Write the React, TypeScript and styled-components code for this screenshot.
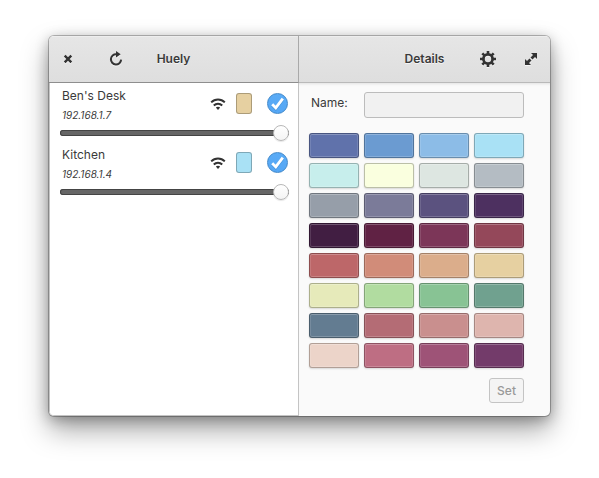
import React, { useState } from "react";
import styled, { createGlobalStyle } from "styled-components";

const GlobalStyle = createGlobalStyle`
  *, *::before, *::after { box-sizing: border-box; }
  body {
    margin: 0;
    background: #fff;
    color: #3a3a3a;
    font-family: Inter, "Open Sans", sans-serif;
    font-size: 12px;
    line-height: 16px;
  }
  button, input { font: inherit; color: inherit; }
`;

const Desktop = styled.div`
  padding: 36px 49px 62px;
`;

const Window = styled.main`
  display: grid;
  grid-template-columns: minmax(0, 250fr) minmax(0, 251fr);
  grid-template-rows: auto 1fr;
  min-height: 380px;
  border-radius: 5px;
  overflow: hidden;
  background: #fafafa;
  box-shadow:
    0 0 0 1px rgba(0, 0, 0, 0.25),
    0 14px 28px rgba(0, 0, 0, 0.35),
    0 3px 14px rgba(0, 0, 0, 0.3);
`;

const HeaderBar = styled.header<{ $divided?: boolean; $line: string }>`
  display: grid;
  grid-template-columns: 1fr auto 1fr;
  align-items: center;
  height: 47px;
  padding: 0 11px;
  border-bottom: 1px solid ${(p) => p.$line};
  border-right: ${(p) => (p.$divided ? "1px solid #a9a9a9" : "none")};
  background: linear-gradient(#e6e6e6, #dedede);
  box-shadow: inset 0 1px 0 #eee;
`;

const Title = styled.h1`
  grid-column: 2;
  margin: 0;
  font-size: 12px;
  font-weight: 600;
  line-height: 16px;
  text-shadow: 0 1px 0 rgba(255, 255, 255, 0.7);
`;

const ButtonGroup = styled.div<{ $gap: number; $end?: boolean }>`
  display: flex;
  align-items: center;
  gap: ${(p) => p.$gap}px;
  justify-content: ${(p) => (p.$end ? "flex-end" : "flex-start")};
  grid-column: ${(p) => (p.$end ? 3 : 1)};
`;

const IconButton = styled.button`
  display: flex;
  width: 16px;
  height: 16px;
  padding: 0;
  border: 0;
  background: none;
  filter: drop-shadow(0 1px 0 rgba(255, 255, 255, 0.7));
`;

const LightList = styled.ul`
  margin: 0;
  padding: 0;
  list-style: none;
  background: #fff;
  border: 1px solid #c4c4c4;
  border-top: 0;
  border-bottom-left-radius: 4px;
`;

const LightRow = styled.li`
  display: grid;
  grid-template-columns: 1fr auto;
  align-items: start;
  height: 59px;
  padding: 5px 9px 0 10px;
`;

const LightText = styled.div`
  padding-left: 2px;
`;

const LightName = styled.div`
  line-height: 16px;
`;

const Address = styled.div`
  padding-top: 3px;
  font-size: 10px;
  font-style: italic;
  line-height: 16px;
`;

const LightControls = styled.div`
  display: flex;
  align-items: center;
  padding: 5px 1px 0 0;
`;

const Signal = styled.span`
  display: flex;
  margin-right: 10px;
`;

const LightColor = styled.button<{ $color: string }>`
  width: 16px;
  height: 21px;
  margin-right: 15px;
  padding: 0;
  border: 1px solid rgba(0, 0, 0, 0.25);
  border-radius: 3px;
  background: ${(p) => p.$color};
`;

const Power = styled.label`
  display: grid;
  width: 21px;
  height: 21px;
  > * { grid-area: 1 / 1; }
  svg { pointer-events: none; }
`;

const PowerBox = styled.input`
  appearance: none;
  width: 21px;
  height: 21px;
  margin: 0;
  border: 1px solid #aaa;
  border-radius: 50%;
  background: #fafafa;
  &:checked {
    border-color: #3f87c9;
    background: linear-gradient(#5aabf6, #55a7f5);
  }
`;

const Slider = styled.input`
  grid-column: 1 / -1;
  appearance: none;
  display: block;
  width: 100%;
  height: 16px;
  margin: 0;
  background: none;
  &::-webkit-slider-runnable-track {
    height: 6px;
    border-radius: 3px;
    background: #666;
    box-shadow: inset 0 0 0 1px #444;
  }
  &::-webkit-slider-thumb {
    appearance: none;
    width: 16px;
    height: 16px;
    margin-top: -5px;
    border: 1px solid #b8b8b8;
    border-radius: 50%;
    background: linear-gradient(#fff, #f4f4f4);
    box-shadow: 0 1px 1px rgba(0, 0, 0, 0.1);
  }
`;

const Details = styled.form`
  padding: 9px 26px 13px 10px;
  box-shadow: inset 0 3px 3px -2px rgba(0, 0, 0, 0.1);
`;

const Field = styled.label`
  display: grid;
  grid-template-columns: 53px 1fr;
  align-items: center;
  padding-left: 2px;
  > span { padding-bottom: 4px; }
`;

const TextBox = styled.input`
  width: 100%;
  min-width: 0;
  height: 26px;
  padding: 0 6px;
  border: 1px solid #bcbcbc;
  border-radius: 3px;
  background: #f1f1f1;
  outline: none;
`;

const Palette = styled.div`
  display: grid;
  grid-template-columns: repeat(4, 1fr);
  gap: 5px;
  margin-top: 15px;
`;

const Swatch = styled.button<{ $color: string }>`
  height: 25px;
  padding: 0;
  border: 1px solid rgba(0, 0, 0, 0.25);
  border-radius: 3px;
  background: ${(p) => p.$color};
  box-shadow:
    inset 0 0 0 1px rgba(255, 255, 255, 0.12),
    inset 0 1px 0 rgba(255, 255, 255, 0.15),
    inset 0 -1px 0 rgba(255, 255, 255, 0.08),
    0 1px 2px rgba(0, 0, 0, 0.14);
`;

const Actions = styled.div`
  display: flex;
  justify-content: flex-end;
  margin-top: 10px;
`;

const SetButton = styled.button`
  height: 25px;
  padding: 0 7px;
  border: 1px solid #c4c4c4;
  border-radius: 3px;
  background: #f4f4f4;
  color: #999;
  font-weight: 500;
  line-height: 16px;
`;

const CloseIcon = () => (
  <svg width="16" height="16" viewBox="0 0 16 16" fill="none" stroke="#333" strokeWidth="2.4">
    <path d="M4.7 4.7 11.3 11.3M11.3 4.7 4.7 11.3" />
  </svg>
);

const RefreshIcon = () => (
  <svg width="16" height="16" viewBox="0 0 16 16" fill="none">
    <path d="M8.4 3.3A5.1 5.1 0 1 0 13.1 8.6" stroke="#333" strokeWidth="2" />
    <path d="M8 0v6.6L12.7 3.3z" fill="#333" />
  </svg>
);

const GearIcon = () => (
  <svg width="16" height="16" viewBox="0 0 16 16" fill="none" stroke="#333">
    <circle cx="8" cy="8" r="4.6" strokeWidth="2.8" />
    <path
      d="M8 0v3M8 13v3M0 8h3M13 8h3M2.3 2.3l2 2M11.7 11.7l2 2M13.7 2.3l-2 2M4.3 11.7l-2 2"
      strokeWidth="2.6"
    />
  </svg>
);

const ExpandIcon = () => (
  <svg width="16" height="16" viewBox="0 0 16 16" fill="#333">
    <path d="M8 2h6v6l-2-2-2.5 2.5-2-2L10 4zM2 8l2 2 2.5-2.5 2 2L6 12l2 2H2z" />
  </svg>
);

const WifiIcon = () => (
  <svg width="16" height="16" viewBox="0 0 16 16" fill="none" stroke="#333" strokeWidth="2">
    <path d="M1.2 6.4C5 2.5 11 2.5 14.8 6.4" />
    <path d="M3.8 9.5C6.2 7.1 9.8 7.1 12.2 9.5" />
    <path d="M5.8 11.5Q8 9.9 10.2 11.5L8 14z" fill="#333" stroke="none" />
  </svg>
);

const CheckIcon = () => (
  <svg width="21" height="21" viewBox="0 0 21 21" fill="none">
    <path d="m5.2 11.2 3.6 3.7L15.8 5.6" stroke="#2f78bd" strokeOpacity=".45" strokeWidth="2.8" transform="translate(0 1)" />
    <path d="m5.2 11.2 3.6 3.7L15.8 5.6" stroke="#fff" strokeWidth="2.8" />
  </svg>
);

const lights = [
  { name: "Ben's Desk", address: "192.168.1.7", color: "#e6d0a1" },
  { name: "Kitchen", address: "192.168.1.4", color: "#a9e1f5" },
];

const colors = [
  "#6072ab", "#6b9bd1", "#8cbce7", "#a9e1f5",
  "#c7eeec", "#faffdf", "#dde6e1", "#b4bcc3",
  "#969ea9", "#7b7b99", "#5b527f", "#4d3060",
  "#411e42", "#602244", "#7c3658", "#94485a",
  "#bd6769", "#d18c79", "#dbad8b", "#e6d0a1",
  "#e6eaba", "#b1dca0", "#88c394", "#70a18f",
  "#637c91", "#b46c75", "#c98f8e", "#deb5ae",
  "#ecd4c9", "#be6e83", "#9e5377", "#733b6a",
];

export default function App() {
  const [name, setName] = useState("");
  return (
    <>
      <GlobalStyle />
      <Desktop>
        <Window>
          <HeaderBar $divided $line="#8e8e8e">
            <ButtonGroup $gap={32}>
              <IconButton type="button" aria-label="Close"><CloseIcon /></IconButton>
              <IconButton type="button" aria-label="Refresh"><RefreshIcon /></IconButton>
            </ButtonGroup>
            <Title>Huely</Title>
          </HeaderBar>
          <HeaderBar $line="#b9b9b9">
            <Title as="h2">Details</Title>
            <ButtonGroup $gap={27} $end>
              <IconButton type="button" aria-label="Settings"><GearIcon /></IconButton>
              <IconButton type="button" aria-label="Maximize"><ExpandIcon /></IconButton>
            </ButtonGroup>
          </HeaderBar>
          <LightList>
            {lights.map((light) => (
              <LightRow key={light.name}>
                <LightText>
                  <LightName>{light.name}</LightName>
                  <Address>{light.address}</Address>
                </LightText>
                <LightControls>
                  <Signal><WifiIcon /></Signal>
                  <LightColor type="button" aria-label={`${light.name} color`} $color={light.color} />
                  <Power>
                    <PowerBox type="checkbox" defaultChecked aria-label={`${light.name} power`} />
                    <CheckIcon />
                  </Power>
                </LightControls>
                <Slider type="range" min={0} max={100} defaultValue={100} aria-label={`${light.name} brightness`} />
              </LightRow>
            ))}
          </LightList>
          <Details onSubmit={(e) => e.preventDefault()}>
            <Field>
              <span>Name:</span>
              <TextBox type="text" value={name} onChange={(e) => setName(e.target.value)} />
            </Field>
            <Palette>
              {colors.map((color) => (
                <Swatch key={color} type="button" aria-label={color} $color={color} />
              ))}
            </Palette>
            <Actions>
              <SetButton type="submit" disabled={!name}>Set</SetButton>
            </Actions>
          </Details>
        </Window>
      </Desktop>
    </>
  );
}
